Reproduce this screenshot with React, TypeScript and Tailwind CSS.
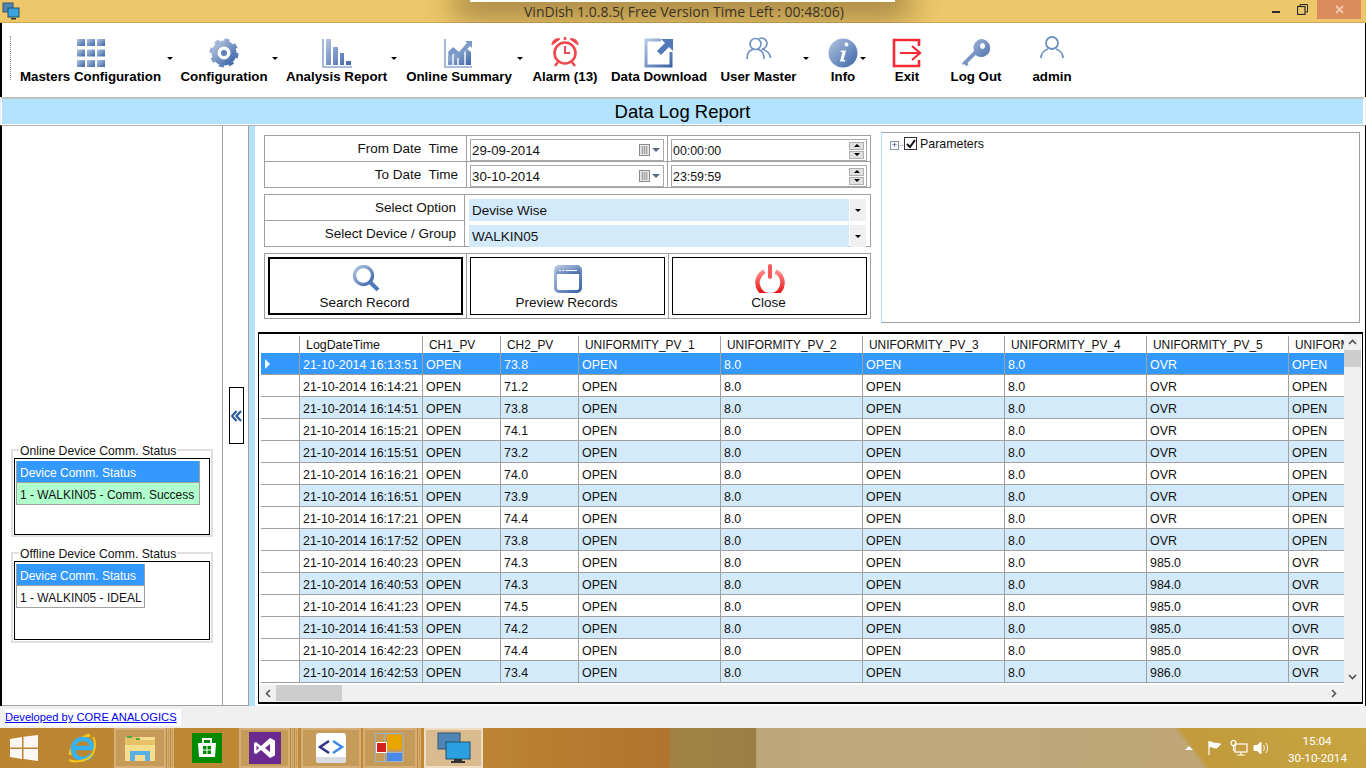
import type { ReactNode } from "react";

const rows = [
  ["16:13:51", "73.8", "OVR", "OPEN"],
  ["16:14:21", "71.2", "OVR", "OPEN"],
  ["16:14:51", "73.8", "OVR", "OPEN"],
  ["16:15:21", "74.1", "OVR", "OPEN"],
  ["16:15:51", "73.2", "OVR", "OPEN"],
  ["16:16:21", "74.0", "OVR", "OPEN"],
  ["16:16:51", "73.9", "OVR", "OPEN"],
  ["16:17:21", "74.4", "OVR", "OPEN"],
  ["16:17:52", "73.8", "OVR", "OPEN"],
  ["16:40:23", "74.3", "985.0", "OVR"],
  ["16:40:53", "74.3", "984.0", "OVR"],
  ["16:41:23", "74.5", "985.0", "OVR"],
  ["16:41:53", "74.2", "985.0", "OVR"],
  ["16:42:23", "74.4", "985.0", "OVR"],
  ["16:42:53", "73.4", "986.0", "OVR"],
];

const columns = [
  "LogDateTime",
  "CH1_PV",
  "CH2_PV",
  "UNIFORMITY_PV_1",
  "UNIFORMITY_PV_2",
  "UNIFORMITY_PV_3",
  "UNIFORMITY_PV_4",
  "UNIFORMITY_PV_5",
  "UNIFORMITY_PV_6",
];

const gridCols =
  "grid grid-cols-[39px_123px_78px_78px_142px_142px_142px_142px_142px_56px]";

function Blue({ id }: { id: string }) {
  return (
    <defs>
      <linearGradient id={id} x1="0" y1="0" x2="1" y2="1">
        <stop offset="0" stopColor="#b4c6e0" />
        <stop offset="1" stopColor="#3c64a8" />
      </linearGradient>
    </defs>
  );
}

function GridIcon() {
  const cells = [0, 1, 2];
  return (
    <svg width="30" height="30" viewBox="0 0 30 30">
      <Blue id="g1" />
      <g fill="url(#g1)">
        {cells.map((y) =>
          cells.map((x) => (
            <rect key={`${x}${y}`} x={1 + x * 10} y={1 + y * 10.5} width="8" height="7" />
          ))
        )}
      </g>
    </svg>
  );
}

function GearIcon() {
  return (
    <svg width="30" height="30" viewBox="0 0 30 30">
      <Blue id="g2" />
      <circle cx="15" cy="15" r="9.5" fill="none" stroke="url(#g2)" strokeWidth="6" />
      <circle cx="15" cy="15" r="12.8" fill="none" stroke="url(#g2)" strokeWidth="3.4" strokeDasharray="5 5.05" />
      <circle cx="15" cy="15" r="3" fill="#5b7fb8" />
    </svg>
  );
}

function BarsIcon() {
  return (
    <svg width="30" height="30" viewBox="0 0 30 30">
      <Blue id="g3" />
      <path d="M1 1v28h29" fill="none" stroke="#8ea8cf" strokeWidth="1.6" />
      <path d="M4 1h5v26H4zM11 9h5v18h-5zM18 15h4v12h-4zM24 23h5v4h-5z" fill="url(#g3)" />
    </svg>
  );
}

function ChartIcon() {
  return (
    <svg width="30" height="30" viewBox="0 0 30 30">
      <Blue id="g4" />
      <path d="M1 1v28h27" fill="none" stroke="#8ea8cf" strokeWidth="1.6" />
      <path d="M4 27V18l5-5 5 6 8-9 5 4v13z" fill="url(#g4)" />
      <path d="M9 27V15M14 27V20M21 27V13" stroke="#fff" strokeWidth="1.4" />
      <path d="M4 14l5-5 6 5 8-9-2-2h7v7l-2-2-11 12-5-5-5 5z" fill="#7a99c8" />
    </svg>
  );
}

function AlarmIcon() {
  return (
    <svg width="30" height="32" viewBox="0 0 30 32" fill="none" stroke="#f0484c">
      <circle cx="15" cy="17" r="10.5" strokeWidth="2.6" />
      <path d="M15 10v7h5" strokeWidth="2" />
      <path d="M2 9a6 6 0 0 1 8-6zM28 9a6 6 0 0 0-8-6z" fill="#f0484c" strokeWidth="1" />
      <path d="M8 26l-3 4M22 26l3 4M15 1v3" strokeWidth="2.4" />
    </svg>
  );
}

function DownloadIcon() {
  return (
    <svg width="30" height="30" viewBox="0 0 30 30" fill="none">
      <Blue id="g5" />
      <path d="M17 2H2v26h25V14" stroke="url(#g5)" strokeWidth="3" />
      <path d="M17 1h12v12l-4-4-8 8-4-4 8-8z" fill="#4f79b8" />
    </svg>
  );
}

function UsersIcon() {
  return (
    <svg className="mb-[7px]" width="26" height="24" viewBox="0 0 26 24" fill="none" stroke="#6f8fc2" strokeWidth="1.6">
      <circle cx="9.5" cy="7" r="5.5" />
      <path d="M1 22c0-6 3-9 6-9.5M12 12.5c3 .5 6 3.500 6 9.500" />
      <path d="M13 1.600A5.500 5.500 0 1 1 16 12c3 1 8 3 8.500 9" />
    </svg>
  );
}

function InfoIcon() {
  return (
    <svg width="30" height="30" viewBox="0 0 30 30">
      <Blue id="g6" />
      <circle cx="15" cy="15" r="14.5" fill="url(#g6)" />
      <path d="M16.500 6.500a2 2 0 1 1 0 .01zM13 12.500h5l-2.500 9.500h2l-.5 1.500h-5l2.500-9.500h-2z" fill="#fff" />
    </svg>
  );
}

function ExitIcon() {
  return (
    <svg width="30" height="30" viewBox="0 0 30 30" fill="none" stroke="#f52a35">
      <path d="M27 8V2H2v26h25v-6" strokeWidth="2.6" />
      <path d="M8 15h19M20 8l8 7-8 7" strokeWidth="2.2" />
    </svg>
  );
}

function KeyIcon() {
  return (
    <svg width="30" height="30" viewBox="0 0 30 30">
      <Blue id="g7" />
      <path
        d="M20 1a9 9 0 1 1-5.500 16L6.500 25l1 2-3 1-.5-2-2 1L1 25l12-12A9 9 0 0 1 20 1zm1.500 4a2.500 3 0 1 0 .01 0z"
        fill="url(#g7)"
        fillRule="evenodd"
      />
    </svg>
  );
}

function UserIcon() {
  return (
    <svg className="mb-[8px]" width="26" height="24" viewBox="0 0 26 24" fill="none" stroke="#6f8fc2" strokeWidth="1.8">
      <circle cx="13" cy="7" r="6" />
      <path d="M2 22c0-5 4-8 7-9M24 22c0-5-4-8-7-9" />
    </svg>
  );
}

function SearchIcon() {
  return (
    <svg className="mb-[2px]" width="28" height="26" viewBox="0 0 28 26" fill="none">
      <Blue id="g8" />
      <circle cx="11.500" cy="10.500" r="9" stroke="url(#g8)" strokeWidth="3.4" />
      <path d="M18 17l8 8" stroke="#4f79b8" strokeWidth="4" />
    </svg>
  );
}

function PreviewIcon() {
  return (
    <svg width="28" height="28" viewBox="0 0 28 28" fill="none">
      <Blue id="g9" />
      <rect x="1.500" y="1.500" width="25" height="25" rx="3.500" stroke="url(#g9)" strokeWidth="3" />
      <rect x="2" y="2" width="24" height="7" fill="url(#g9)" />
      <path d="M5 5.500h2M8.500 5.500h2M12 5.500h11" stroke="#fff" strokeWidth="1.2" />
    </svg>
  );
}

function PowerIcon() {
  return (
    <svg width="30" height="29" viewBox="0 0 30 29" fill="none">
      <defs>
        <linearGradient id="g10" x1="0" y1="0" x2="0" y2="1">
          <stop offset="0" stopColor="#ff8a8a" />
          <stop offset="1" stopColor="#e80808" />
        </linearGradient>
      </defs>
      <path d="M9.500 7.500a12.500 12.500 0 1 0 11 0" stroke="url(#g10)" strokeWidth="4.5" />
      <path d="M15 2v11" stroke="#f85a5a" strokeWidth="4" strokeLinecap="round" />
    </svg>
  );
}

function Caret({ className }: { className: string }) {
  return (
    <span className={`absolute h-0 w-0 border-x-[3px] border-t-[3px] border-x-transparent border-t-black ${className}`} />
  );
}

function ToolItem({
  label,
  icon,
  className,
  caret,
}: {
  label: string;
  icon: ReactNode;
  className: string;
  caret?: string;
}) {
  return (
    <div className={`relative flex flex-col items-center shrink-0 ${className}`}>
      <div className="h-[32px] flex items-end justify-center">{icon}</div>
      <span className="mt-[1px] whitespace-nowrap text-[13.3px] font-bold leading-[15px] text-black">
        {label}
      </span>
      {caret && <Caret className={caret} />}
    </div>
  );
}

function DateRow({ label, date, time, top }: { label: string; date: string; time: string; top?: boolean }) {
  return (
    <div className={`flex ${top ? "h-[25px]" : "h-[26px] border-t border-[#a0a0a0]"}`}>
      <div className="w-[202px] whitespace-pre border-r border-[#a0a0a0] pr-[8px] text-right text-[13.5px] leading-[26px]">
        {label}
      </div>
      <div className="w-[201px] border-r border-[#a0a0a0] px-[3px] pt-[3px]">
        <div className="h-[22px] flex items-center justify-between border border-[#a9a9a9] pl-[1px] pr-[3px]">
          <span className="mt-[2px] text-[13.3px] leading-[18px]">{date}</span>
          <span className="flex items-center gap-[2px]">
            <svg width="11" height="12" viewBox="0 0 11 12">
              <rect x="0.5" y="0.5" width="10" height="11" fill="#e8e8e8" stroke="#8a8a8a" />
              <path d="M2 3h7M2 5h7M2 7h7M2 9h7M3.500 2v8M5.500 2v8M7.500 2v8" stroke="#9a9a9a" strokeWidth="0.7" />
            </svg>
            <span className="h-0 w-0 border-x-[4px] border-t-[4px] border-x-transparent border-t-[#5a6a85]" />
          </span>
        </div>
      </div>
      <div className="flex-1 px-[3px] pt-[3px]">
        <div className="h-[22px] flex items-center justify-between border border-[#a9a9a9] pl-[1px] pr-[2px]">
          <span className="mt-[2px] leading-[18px]">{time}</span>
          <span className="flex h-[17px] w-[15px] flex-col gap-[1px]">
            <span className="flex h-[8px] items-center justify-center bg-[#e1e1e1] border border-[#b0b0b0]">
              <span className="h-0 w-0 border-x-[3px] border-b-[3px] border-x-transparent border-b-black" />
            </span>
            <span className="flex h-[8px] items-center justify-center bg-[#e1e1e1] border border-[#b0b0b0]">
              <span className="h-0 w-0 border-x-[3px] border-t-[3px] border-x-transparent border-t-black" />
            </span>
          </span>
        </div>
      </div>
    </div>
  );
}

function ComboRow({ label, value, top }: { label: string; value: string; top?: boolean }) {
  return (
    <div className={`flex ${top ? "h-[25px]" : "h-[26px]"}`}>
      <div
        className={`w-[200px] border-r border-[#a0a0a0] pr-[8px] text-right text-[13.5px] leading-[26px] ${top ? "" : "border-t"}`}
      >
        {label}
      </div>
      <div className={`flex-1 pl-[4px] ${top ? "pt-[4px]" : "pt-[5px]"}`}>
        <div className="flex h-[22px]">
          <div className="flex-1 bg-[#d3eafa] pl-[3px] text-[13.5px] leading-[23px]">{value}</div>
          <div className="mr-[4px] ml-[1px] flex w-[16px] items-center justify-center bg-[#f0f0f0]">
            <span className="h-0 w-0 border-x-[3px] border-t-[3px] border-x-transparent border-t-black" />
          </div>
        </div>
      </div>
    </div>
  );
}

function ActionCell({ icon, label, className, iconBox }: { icon: ReactNode; label: string; className: string; iconBox: string }) {
  return (
    <div className="flex-1 border-r border-[#a0a0a0] last:border-r-0 p-[3px]">
      <div className={`flex h-full flex-col items-center border-black ${className}`}>
        <div className={`flex items-end justify-center ${iconBox}`}>{icon}</div>
        <span className="mr-[2px] mt-[1px] text-[13.5px] leading-[18px]">{label}</span>
      </div>
    </div>
  );
}

function StatusBox({ title, width, text, rowBg, h, boxH }: { title: string; width: string; text: string; rowBg: string; h: string; boxH: string }) {
  return (
    <fieldset className={`mx-[9px] w-[202px] border-2 border-[#e0e0e0] px-[1px] ${h}`}>
      <legend className="ml-[5px] h-[14px] whitespace-nowrap px-[1px] text-[12.2px] leading-[16px]">{title}</legend>
      <div className={`mt-[1px] border border-black px-[1px] pt-[2px] text-[12px] ${boxH}`}>
        <div className={width}>
          <div className="h-[22px] whitespace-nowrap border-x border-b border-[#a0a0a0] bg-[#3399ff] pl-[3px] leading-[24px] text-white">
            Device Comm. Status
          </div>
          <div className={`h-[22px] whitespace-nowrap border border-t-0 border-[#a0a0a0] pl-[3px] leading-[24px] ${rowBg}`}>
            {text}
          </div>
        </div>
      </div>
    </fieldset>
  );
}

function Tile({ children, className }: { children: ReactNode; className: string }) {
  return <div className={`flex h-[40px] shrink-0 items-center justify-center ${className}`}>{children}</div>;
}

function Stack() {
  return <span className="ml-[1px] h-[40px] w-[3px] shrink-0 border border-[#d5ae78] bg-[#c69a58]" />;
}

export default function App() {
  return (
    <div className="relative flex h-[768px] w-[1366px] flex-col overflow-hidden bg-[#f0f0f0] font-['Liberation_Sans',Arial,sans-serif] text-[12.4px] text-[#111]">
      {/* title bar */}
      <div className="relative flex h-[23px] shrink-0 items-center border-b border-[#cfa95a] bg-[#eec76a]">
        <svg className="ml-[2px]" width="18" height="18" viewBox="0 0 18 18">
          <rect x="1" y="1" width="10" height="9" fill="#4f86b5" stroke="#35566f" />
          <rect x="6" y="6" width="11" height="9" fill="#38a5e0" stroke="#23506f" />
          <path d="M9 16h5v1.500H9z" fill="#333" />
        </svg>
        <div className="absolute left-[470px] top-0 h-[2px] w-[425px] bg-white shadow-[0_0_30px_16px_rgba(50,35,10,0.4)]" />
        <span className="absolute left-[524px] top-[2px] font-['Open_Sans',sans-serif] text-[14px] leading-[20px] text-[#3a3226]">
          VinDish 1.0.8.5( Free Version Time Left : 00:48:06)
        </span>
        <div className="ml-auto mr-[5px] flex h-full items-start">
          <span className="mr-[17px] mt-[11px] h-[2px] w-[8px] bg-[#2a2a2a]" />
          <svg className="mr-[9px] mt-[4px]" width="11" height="11" viewBox="0 0 11 11" fill="none" stroke="#2a2a2a">
            <rect x="0.5" y="2.500" width="7.500" height="8" strokeWidth="1.2" />
            <path d="M3 2V.5h7.500V8H8.500" />
          </svg>
          <div className="flex h-[19px] w-[44px] items-center justify-center bg-[#dc8c5c]">
            <svg width="9" height="9" viewBox="0 0 9 9" stroke="#f3c9ae" strokeWidth="1.8">
              <path d="M1 1l7 7M8 1l-7 7" />
            </svg>
          </div>
        </div>
      </div>

      {/* toolbar */}
      <div className="relative flex h-[74px] shrink-0 items-start border-l-2 border-r border-x-black bg-white pl-[18px] pt-[13px]">
        <div className="absolute left-[8px] top-[13px] h-[44px] border-l border-dotted border-[#909090]" />
        <ToolItem label="Masters Configuration" icon={<GridIcon />} className="w-[141px]" caret="left-[147px] top-[21px]" />
        <ToolItem label="Configuration" icon={<GearIcon />} className="ml-[20px] w-[86px]" caret="left-[91px] top-[21px]" />
        <ToolItem label="Analysis Report" icon={<BarsIcon />} className="ml-[20px] w-[99px]" caret="left-[104px] top-[21px]" />
        <ToolItem label="Online Summary" icon={<ChartIcon />} className="ml-[20px] w-[106px]" caret="left-[111px] top-[21px]" />
        <ToolItem label="Alarm (13)" icon={<AlarmIcon />} className="ml-[19px] w-[68px]" />
        <ToolItem label="Data Download" icon={<DownloadIcon />} className="ml-[11px] w-[98px]" />
        <ToolItem label="User Master" icon={<UsersIcon />} className="ml-[11px] w-[79px]" caret="left-[84px] top-[21px]" />
        <ToolItem label="Info" icon={<InfoIcon />} className="ml-[24px] w-[42px]" caret="left-[38px] top-[21px]" />
        <ToolItem label="Exit" icon={<ExitIcon />} className="ml-[22px] w-[42px]" />
        <ToolItem label="Log Out" icon={<KeyIcon />} className="ml-[22px] w-[52px]" />
        <ToolItem label="admin" icon={<UserIcon />} className="ml-[28px] w-[44px]" />
      </div>

      {/* heading band */}
      <div className="mx-[1px] flex h-[28px] shrink-0 items-center justify-center border-l border-l-white border-r-2 border-r-white border-t-2 border-t-[#c0c0c0] border-b border-b-white bg-[#b3e3fe] text-[18.5px] text-black">
        Data Log Report
      </div>

      {/* main */}
      <div className="flex h-[581px] shrink-0 border-l-2 border-l-black border-r border-r-black border-t border-t-[#b0b0b0] bg-white">
        {/* left column */}
        <div className="flex w-[220px] shrink-0 flex-col justify-end border-b border-[#a0a0a0] pb-[62px]">
          <StatusBox
            title="Online Device Comm. Status"
            width="w-[184px]"
            text="1 - WALKIN05 - Comm. Success"
            rowBg="bg-[#b0ffcc]"
            h="h-[94px] mb-[9px]"
            boxH="h-[77px]"
          />
          <StatusBox
            title="Offline Device Comm. Status"
            width="w-[129px]"
            text="1 - WALKIN05 - IDEAL"
            rowBg="bg-white"
            h="h-[97px]"
            boxH="h-[79px]"
          />
        </div>
        {/* collapse column */}
        <div className="flex w-[27px] shrink-0 items-start justify-center border-x border-b border-[#a0a0a0] pl-[2px] pt-[261px]">
          <div className="flex h-[57px] w-[15px] items-center justify-center border border-black">
            <svg width="11" height="12" viewBox="0 0 11 12" fill="none" stroke="#2a5d9c" strokeWidth="2.2">
              <path d="M5.500 1L1 6l4.500 5M10 1L5.500 6l4.500 5" />
            </svg>
          </div>
        </div>
        <div className="w-[6px] shrink-0 bg-[#b3e3fe]" />

        {/* right content */}
        <div className="flex flex-1 flex-col pl-[2px]">
          <div className="flex h-[206px] shrink-0">
            <div className="ml-[7px] w-[607px] pt-[9px]">
              <div className="border border-[#a0a0a0]">
                <DateRow top label="From Date  Time" date="29-09-2014" time="00:00:00" />
                <DateRow label="To Date  Time" date="30-10-2014" time="23:59:59" />
              </div>
              <div className="mt-[6px] border border-[#a0a0a0]">
                <ComboRow top label="Select Option" value="Devise Wise" />
                <ComboRow label="Select Device / Group" value="WALKIN05" />
              </div>
              <div className="mt-[6px] flex h-[66px] border border-[#a0a0a0]">
                <ActionCell icon={<SearchIcon />} label="Search Record" className="border-2" iconBox="h-[34px]" />
                <ActionCell icon={<PreviewIcon />} label="Preview Records" className="border" iconBox="h-[35px]" />
                <ActionCell icon={<PowerIcon />} label="Close" className="border" iconBox="h-[35px]" />
              </div>
            </div>
            <div className="ml-[10px] mt-[6px] flex h-[191px] w-[479px] items-start gap-[1px] border border-[#a0a0a0] border-l-[#b3e3fe] pl-[8px] pt-[4px]">
              <span className="mt-[4px] flex h-[9px] w-[9px] items-center justify-center border border-[#8a94a8] text-[9px] leading-none text-[#2a3f7c]">+</span>
              <span className="mt-[8px] w-[3px] border-b border-dotted border-[#888]" />
              <span className="flex h-[13px] w-[13px] items-center justify-center border border-[#333] bg-white">
                <svg width="10" height="10" viewBox="0 0 10 10" fill="none" stroke="#111" strokeWidth="2">
                  <path d="M1 5l3 3 5-7" />
                </svg>
              </span>
              <span className="ml-[2px] leading-[14px]">Parameters</span>
            </div>
          </div>

          {/* data grid */}
          <div className="ml-[1px] flex h-[372px] w-[1105px] shrink-0 flex-col border-x border-y-2 border-black">
            <div className="flex min-h-0 flex-1">
              <div className="w-[1085px] shrink-0 overflow-hidden bg-white pl-[2px]">
                <div className={`${gridCols} h-[19px] w-[1140px]`}>
                  <div className="mt-[2px] h-[17px] border-r border-[#a0a0a0]" />
                  {columns.map((c, i) => (
                    <div
                      key={c}
                      className={`mt-[2px] h-[17px] whitespace-nowrap border-r border-[#a0a0a0] pl-[6px] leading-[19px] ${i === 0 ? "text-[12.4px]" : "text-[11.9px]"}`}
                    >
                      {c}
                    </div>
                  ))}
                </div>
                {rows.map((r, i) => {
                  const selected = i === 0;
                  const bg = selected ? "bg-[#3399ff] text-white" : i % 2 === 0 ? "bg-[#d3eafa]" : "bg-white";
                  const cells = [
                    `21-10-2014 ${r[0]}`,
                    "OPEN",
                    r[1],
                    "OPEN",
                    "8.0",
                    "OPEN",
                    "8.0",
                    r[2],
                    r[3],
                  ];
                  return (
                    <div key={r[0]} className={`${gridCols} h-[22px] w-[1140px]`}>
                      <div
                        className={`flex h-[22px] items-center border-b border-r border-[#a0a0a0] pl-[4px] ${selected ? "bg-[#3399ff]" : "bg-white"}`}
                      >
                        {selected && (
                          <span className="h-0 w-0 border-y-[5px] border-l-[5px] border-y-transparent border-l-white" />
                        )}
                      </div>
                      {cells.map((c, j) => (
                        <div key={j} className={`h-[22px] border-b border-r border-[#a0a0a0] pl-[3px] leading-[24px] ${bg}`}>
                          {c}
                        </div>
                      ))}
                    </div>
                  );
                })}
              </div>
              {/* vertical scrollbar */}
              <div className="flex w-[17px] shrink-0 flex-col bg-[#f0f0f0]">
                <div className="flex h-[16px] items-center justify-center">
                  <svg width="9" height="6" viewBox="0 0 9 6" fill="none" stroke="#505050" strokeWidth="1.6">
                    <path d="M1 5l3.500-3.500L8 5" />
                  </svg>
                </div>
                <div className="h-[17px] bg-[#cdcdcd]" />
                <div className="flex-1" />
                <div className="flex h-[16px] items-center justify-center">
                  <svg width="9" height="6" viewBox="0 0 9 6" fill="none" stroke="#505050" strokeWidth="1.6">
                    <path d="M1 1l3.500 3.500L8 1" />
                  </svg>
                </div>
              </div>
            </div>
            {/* horizontal scrollbar */}
            <div className="flex h-[17px] shrink-0 items-stretch bg-[#f0f0f0]">
              <div className="flex w-[17px] items-center justify-center">
                <svg width="6" height="9" viewBox="0 0 6 9" fill="none" stroke="#505050" strokeWidth="1.6">
                  <path d="M5 1L1.500 4.500 5 8" />
                </svg>
              </div>
              <div className="h-[16px] w-[66px] bg-[#cdcdcd]" />
              <div className="flex-1" />
              <div className="mr-[20px] flex w-[17px] items-center justify-center">
                <svg width="6" height="9" viewBox="0 0 6 9" fill="none" stroke="#505050" strokeWidth="1.6">
                  <path d="M1 1l3.500 3.500L1 8" />
                </svg>
              </div>
            </div>
          </div>
        </div>
      </div>

      {/* footer link */}
      <div className="flex h-[22px] shrink-0 items-center pl-[5px] pt-[1px]">
        <a className="h-[17px] bg-white pr-[4px] text-[11.2px] leading-[17px] text-[#0000ee] underline">
          Developed by CORE ANALOGICS
        </a>
      </div>

      {/* taskbar */}
      <div className="flex h-[40px] shrink-0 items-center bg-[linear-gradient(53deg,transparent_86.2%,#c29a3c_86.7%,#c8a63f_100%),linear-gradient(90deg,#ba8532_0%,#c08a35_30%,#b0742e_49%,#a08245_49.1%,#9a7f45_55.3%,#bea87a_55.4%,#bfa677_100%)]">
        <svg className="ml-[10px]" width="28" height="26" viewBox="0 0 28 26" fill="#fff" opacity="0.95">
          <path d="M0 4l12-2v10.500H0zM13.500 1.800L28 0v12.500H13.500zM0 14h12v10L0 22zM13.500 14H28v12l-14.500-2z" />
        </svg>
        <Tile className="ml-[27px] w-[34px]">
          <svg width="34" height="34" viewBox="0 0 34 34" fill="none">
            <path d="M5 24c1-9 8-17 20-20" stroke="#f5c518" strokeWidth="3" />
            <path d="M8 17h19c0-6-4-9-9-9-6 0-10 4-10 10s4 10 10 10c4 0 7-2 8.500-5" stroke="#35b2ef" strokeWidth="4.5" />
            <path d="M28 6c4 6 2 18-6 22-6 3-14 3-18 1" stroke="#f5c518" strokeWidth="2" />
          </svg>
        </Tile>
        <Tile className="ml-[15px] w-[52px] border-2 border-[#d5ae78] bg-[#c69a58]">
          <svg width="32" height="30" viewBox="0 0 32 30">
            <path d="M1 4h30v24H1z" fill="#f7dd8e" />
            <path d="M1 4h13l2 3h15v5H1z" fill="#e9c268" />
            <path d="M3 3h5v2H3zM12 5h4v2h-4z" fill="#40b040" />
            <path d="M6 18h20v10h-5v-6H11v6H6z" fill="#5cb0e8" />
          </svg>
        </Tile>
        <Stack />
        <Stack />
        <Tile className="ml-[18px] w-[30px]">
          <svg width="30" height="30" viewBox="0 0 30 30">
            <rect width="30" height="30" fill="#008a00" />
            <path d="M6 10h18l-1 14H7z" fill="#fff" />
            <path d="M11 10V6h8v4" fill="none" stroke="#fff" strokeWidth="2" />
            <path d="M11 13h3.500v3.500H11zM15.500 13H19v3.500h-3.500zM11 17.500h3.500V21H11zM15.500 17.500H19V21h-3.500z" fill="#008a00" />
          </svg>
        </Tile>
        <Tile className="ml-[17px] w-[51px] border-2 border-[#d5ae78] bg-[#c69a58]">
          <svg width="32" height="32" viewBox="0 0 32 32">
            <rect width="32" height="32" fill="#6a2a90" />
            <path d="M21 6l5 2.500v15L21 26l-9-8-5 4-2-1V11l2-1 5 4zM21 12l-5 4 5 4zM7.500 13.500v5L10 16z" fill="#fff" fillRule="evenodd" />
          </svg>
        </Tile>
        <Stack />
        <Stack />
        <Tile className="ml-[3px] w-[60px] border-2 border-[#d5ae78] bg-[#c69a58]">
          <svg width="30" height="30" viewBox="0 0 30 30">
            <rect width="30" height="30" rx="3" fill="#fff" />
            <path d="M0 24h30v3a3 3 0 0 1-3 3H3a3 3 0 0 1-3-3z" fill="#d8dce0" />
            <path d="M13 8L4 14l9 6" fill="none" stroke="#33337f" strokeWidth="2.5" />
            <path d="M17 8l9 6-9 6" fill="none" stroke="#3a8ee0" strokeWidth="2.5" />
          </svg>
        </Tile>
        <Tile className="ml-[2px] w-[54px] border-2 border-[#d5ae78] bg-[#c69a58]">
          <svg width="30" height="30" viewBox="0 0 30 30">
            <path d="M.5.5h28v28H.5zM.5 9.500h9M.5 19.500h9M9.500.5v28M9.500 19.500h19" fill="none" stroke="#9fb4cc" />
            <rect x="12" y="1.500" width="15" height="15" fill="#e8a500" />
            <rect x="1.500" y="9.500" width="10" height="10" fill="#d42020" stroke="#fff" />
            <rect x="12" y="20" width="15" height="8" fill="#4a8aec" />
          </svg>
        </Tile>
        <Stack />
        <Tile className="ml-[3px] w-[59px] border-2 border-[#f0dcc0] bg-[#d8bb8e]">
          <svg width="34" height="32" viewBox="0 0 34 32">
            <rect x="1" y="1" width="22" height="16" fill="#4f86b5" stroke="#35566f" />
            <rect x="9" y="10" width="24" height="17" fill="#2aa0e0" stroke="#23506f" />
            <path d="M17 27h8v2h3v2H14v-2h3z" fill="#333" />
          </svg>
        </Tile>

        <div className="ml-auto flex items-center">
          <span className="mr-[14px] h-0 w-0 border-x-[4px] border-b-[4px] border-x-transparent border-b-white" />
          <svg width="16" height="16" viewBox="0 0 16 16" fill="#fff" stroke="#fff">
            <path d="M2 1v14" fill="none" strokeWidth="1.2" />
            <path d="M2 2c4-1 5 2 8 1l4 1-4 4c-3 1-5-2-8-1z" strokeWidth="0.5" />
          </svg>
          <svg className="ml-[7px]" width="18" height="16" viewBox="0 0 18 16" fill="none" stroke="#fff" strokeWidth="1.2">
            <rect x="5" y="4" width="12" height="8" />
            <path d="M11 12v3M7 15h8" />
            <circle cx="3.500" cy="3" r="2.500" />
            <path d="M3.500 5.500V11" />
          </svg>
          <svg className="ml-[5px]" width="17" height="16" viewBox="0 0 17 16" fill="none" stroke="#fff">
            <path d="M1 5.500h3L8 2v12L4 10.500H1z" fill="#fff" />
            <path d="M10.500 5c1 1.500 1 4.500 0 6M13 3c2 3 2 7 0 10" />
          </svg>
          <div className="ml-[18px] mr-[20px] w-[58px] whitespace-nowrap pt-[3px] text-center font-['Roboto',sans-serif] text-[11.7px] leading-[17px] text-white">
            <div>15:04</div>
            <div>30-10-2014</div>
          </div>
        </div>
      </div>
    </div>
  );
}
